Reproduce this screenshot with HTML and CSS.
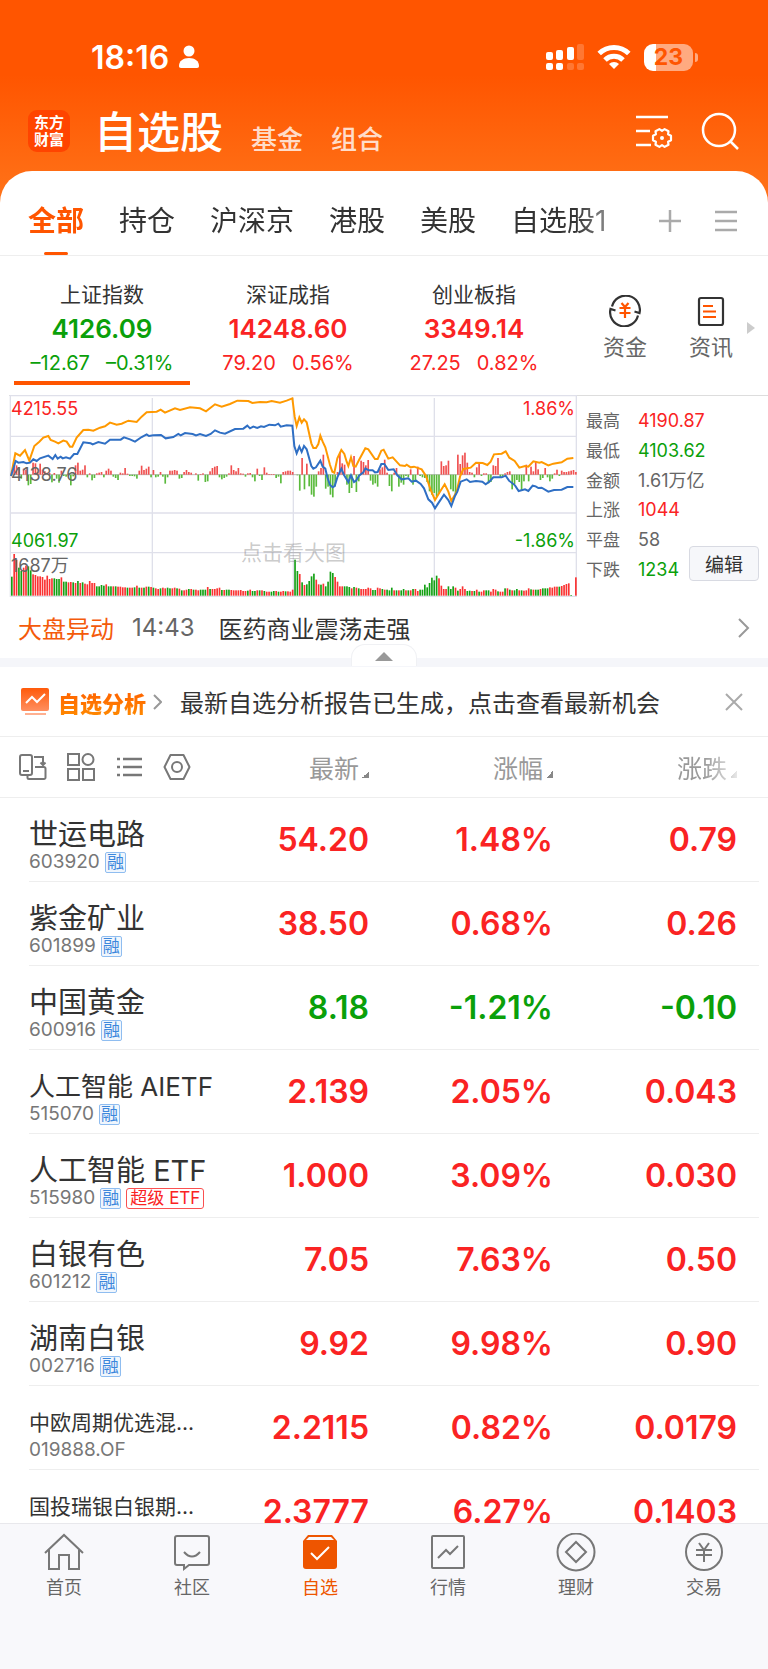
FILE: index.html
```html
<!DOCTYPE html>
<html lang="zh-CN">
<head>
  <meta charset="UTF-8">
  <meta name="viewport" content="width=device-width, initial-scale=1">
  <title>自选股</title>
  <link rel="stylesheet" href="styles.css">
</head>
<body>
  <header class="header">
    <div class="status-bar">
      <span class="time">18:16</span>
      <svg class="person" width="22" height="24" viewBox="0 0 22 24" fill="#fff"><circle cx="11" cy="6" r="5.5"/><path d="M1 21c0-5 4-8 10-8s10 3 10 8c0 1-.6 2-2 2H3c-1.400 0-2-1-2-2z"/></svg>
      <div class="status-icons">
        <svg width="38" height="28" viewBox="0 0 38 28" fill="#fff">
          <rect x="0" y="9" width="7" height="8" rx="2"/><rect x="10" y="7" width="7" height="10" rx="2"/><rect x="21" y="4" width="7" height="13" rx="2"/><rect x="31" y="1" width="7" height="16" rx="2" opacity=".2"/>
          <rect x="0" y="20" width="7" height="7" rx="2"/><rect x="10" y="20" width="7" height="7" rx="2"/><rect x="21" y="20" width="7" height="7" rx="2" opacity=".2"/><rect x="31" y="20" width="7" height="7" rx="2" opacity=".2"/>
        </svg>
        <svg width="34" height="26" viewBox="0 0 34 26" fill="none" stroke="#fff" stroke-width="5">
          <path d="M2.200 9.500a21 21 0 0 1 29.600 0"/><path d="M8 16a12.800 12.800 0 0 1 18 0"/><path d="M17 25l-5-5a7.200 7.200 0 0 1 10 0z" fill="#fff" stroke="none"/>
        </svg>
        <div class="battery"><span>23</span></div>
      </div>
    </div>
    <div class="title-bar">
      <a class="logo" href="#">东方<br>财富</a>
      <nav class="main-nav">
        <a class="current" href="#">自选股</a>
        <a href="#">基金</a>
        <a href="#">组合</a>
      </nav>
      <button class="icon-btn" type="button" aria-label="设置">
        <svg width="38" height="38" viewBox="0 0 38 38" fill="none" stroke="#fff" stroke-width="2.500">
          <path d="M1 5h32M1 19h14M1 33h15"/>
          <path d="M36 23.700V28.300L33.100 29.800 33.500 32.700 29.600 34.900 27 33.200 24.400 34.900 20.500 32.700 20.900 29.800 18 28.300V23.700L20.900 22.200 20.500 19.300 24.400 17.100 27 18.800 29.600 17.100 33.500 19.300 33.100 22.200z" stroke-width="2.200" stroke-linejoin="round"/>
          <circle cx="27" cy="26" r="2" fill="#fff" stroke="none"/>
        </svg>
      </button>
      <button class="icon-btn" type="button" aria-label="搜索">
        <svg width="38" height="38" viewBox="0 0 38 38" fill="none" stroke="#fff" stroke-width="2.500"><circle cx="18" cy="18" r="16"/><path d="M29 29l8 8"/></svg>
      </button>
    </div>
  </header>

  <main class="content">
    <div class="group-bar">
      <nav class="groups">
        <a class="current" href="#">全部</a>
        <a href="#">持仓</a>
        <a href="#">沪深京</a>
        <a href="#">港股</a>
        <a href="#">美股</a>
        <a href="#">自选股1</a>
      </nav>
      <button type="button" aria-label="添加分组">
        <svg width="24" height="24" viewBox="0 0 24 24" stroke="#aaa" stroke-width="2.500"><path d="M1 12h22M12 1v22"/></svg>
      </button>
      <button type="button" aria-label="管理分组">
        <svg width="22" height="24" viewBox="0 0 22 24" stroke="#aaa" stroke-width="2.500"><path d="M0 3h22M0 12h22M0 21h22"/></svg>
      </button>
    </div>

    <section class="indexes">
      <button class="index down current" type="button">
        <span class="index-name">上证指数</span>
        <strong>4126.09</strong>
        <span class="change"><span>–12.67</span><span>–0.31%</span></span>
      </button>
      <button class="index up" type="button">
        <span class="index-name">深证成指</span>
        <strong>14248.60</strong>
        <span class="change"><span>79.20</span><span>0.56%</span></span>
      </button>
      <button class="index up" type="button">
        <span class="index-name">创业板指</span>
        <strong>3349.14</strong>
        <span class="change"><span>27.25</span><span>0.82%</span></span>
      </button>
      <div class="shortcuts">
        <a href="#">
          <svg width="32" height="32" viewBox="0 0 32 32" fill="none" stroke="#333" stroke-width="2.200">
            <path d="M3 11.500a14 14 0 0 1 27.500 6.500l-5-1.500M29 20.500a14 14 0 0 1-27.500-6.500l5 1.500"/>
            <path d="M12.500 8l3.500 4 3.500-4M10.500 13h11M10.500 18h11M16 12v11" stroke="#ff5500"/>
          </svg>
          资金
        </a>
        <a href="#">
          <svg width="32" height="32" viewBox="0 0 32 32" fill="none" stroke="#333" stroke-width="2.200">
            <rect x="4" y="3" width="24" height="27" rx="2"/><path d="M8 11h10M8 16.500h13M8 22h13" stroke="#ff5500"/>
          </svg>
          资讯
        </a>
      </div>
      <svg class="more" width="8" height="12" viewBox="0 0 8 12" fill="#ccc"><path d="M0 0l8 6-8 6z"/></svg>
    </section>

    <section class="market">
      <div class="chart">
        <svg id="chart" viewBox="27 15 1704 606"></svg>
        <span class="label high up">4215.55</span>
        <span class="label high-rate up">1.86%</span>
        <span class="label middle">4138.76</span>
        <span class="label low down">4061.97</span>
        <span class="label low-rate down">-1.86%</span>
        <span class="label volume">1687万</span>
        <span class="label hint">点击看大图</span>
      </div>
      <dl class="stats">
        <div><dt>最高</dt><dd class="up">4190.87</dd></div>
        <div><dt>最低</dt><dd class="down">4103.62</dd></div>
        <div><dt>金额</dt><dd>1.61万亿</dd></div>
        <div><dt>上涨</dt><dd class="up">1044</dd></div>
        <div><dt>平盘</dt><dd>58</dd></div>
        <div><dt>下跌</dt><dd class="down">1234</dd></div>
      </dl>
      <button class="edit" type="button">编辑</button>
    </section>

    <a class="news" href="#">
      <span class="news-type">大盘异动</span>
      <time>14:43</time>
      <span class="news-text">医药商业震荡走强</span>
      <svg width="12" height="20" viewBox="0 0 12 20" fill="none" stroke="#999" stroke-width="2"><path d="M1 1l9 9-9 9"/></svg>
    </a>
    <div class="divider">
      <button class="fold" type="button" aria-label="收起">
        <svg width="18" height="9" viewBox="0 0 18 9" fill="#999"><path d="M0 9l9-9 9 9z"/></svg>
      </button>
    </div>

    <div class="report">
      <svg width="28" height="28" viewBox="0 0 28 28" fill="none">
        <defs><linearGradient id="orange" x1="0" y1="0" x2="0" y2="1"><stop offset="0" stop-color="#ff5a0a"/><stop offset="1" stop-color="#ff8f60"/></linearGradient></defs>
        <rect width="28" height="23" rx="2" fill="url(#orange)"/><path d="M5 15l6-6 5 5 8-8" stroke="#fff" stroke-width="2"/><path d="M4 26h21" stroke="#ffb090" stroke-width="2"/>
      </svg>
      <a class="report-title" href="#">自选分析</a>
      <svg width="9" height="16" viewBox="0 0 9 16" fill="none" stroke="#999" stroke-width="2"><path d="M1 1l7 7-7 7"/></svg>
      <a class="report-text" href="#">最新自选分析报告已生成，点击查看最新机会</a>
      <button type="button" aria-label="关闭">
        <svg width="18" height="18" viewBox="0 0 18 18" stroke="#aaa" stroke-width="2"><path d="M1 1l16 16M17 1L1 17"/></svg>
      </button>
    </div>

    <table class="stocks">
      <thead>
        <tr>
          <th class="tools">
            <button type="button" aria-label="横屏"><svg width="28" height="28" viewBox="0 0 28 28"><rect x="1" y="2" width="12" height="20" rx="2"/><path d="M4 18h6M15 4h9v8M21.500 9.500l2.500 2.500 2.500-2.500M16 14h9a1.500 1.500 0 0 1 1.500 1.500v9a1.500 1.500 0 0 1-1.500 1.500H10a1.500 1.500 0 0 1-1.500-1.500V22"/></svg></button>
            <button type="button" aria-label="宫格"><svg width="28" height="28" viewBox="0 0 28 28"><rect x="1" y="1" width="11" height="11"/><circle cx="21" cy="6.500" r="5.500"/><rect x="1" y="16" width="11" height="11"/><rect x="16" y="16" width="11" height="11"/></svg></button>
            <button type="button" aria-label="列表"><svg width="28" height="28" viewBox="0 0 28 28"><path d="M2 6h3M2 14h3M2 22h3M8 6h19M8 14h19M8 22h19" stroke-width="2.500"/></svg></button>
            <button type="button" aria-label="设置"><svg width="28" height="28" viewBox="0 0 28 28"><path d="M7.500 2h13l6 12-6 12h-13l-6-12z" stroke-linejoin="round"/><circle cx="14" cy="14" r="5"/></svg></button>
          </th>
          <th><button type="button">最新<i></i></button></th>
          <th><button type="button">涨幅<i></i></button></th>
          <th class="fade"><button type="button">涨跌<i></i></button></th>
        </tr>
      </thead>
      <tbody>
        <tr class="up">
          <td><a href="#">世运电路</a><div class="code">603920<em>融</em></div></td>
          <td>54.20</td><td>1.48%</td><td>0.79</td>
        </tr>
        <tr class="up">
          <td><a href="#">紫金矿业</a><div class="code">601899<em>融</em></div></td>
          <td>38.50</td><td>0.68%</td><td>0.26</td>
        </tr>
        <tr class="down">
          <td><a href="#">中国黄金</a><div class="code">600916<em>融</em></div></td>
          <td>8.18</td><td>-1.21%</td><td>-0.10</td>
        </tr>
        <tr class="up">
          <td><a class="medium" href="#">人工智能 AIETF</a><div class="code">515070<em>融</em></div></td>
          <td>2.139</td><td>2.05%</td><td>0.043</td>
        </tr>
        <tr class="up">
          <td><a href="#">人工智能 ETF</a><div class="code">515980<em>融</em><em class="super">超级 ETF</em></div></td>
          <td>1.000</td><td>3.09%</td><td>0.030</td>
        </tr>
        <tr class="up">
          <td><a href="#">白银有色</a><div class="code">601212<em>融</em></div></td>
          <td>7.05</td><td>7.63%</td><td>0.50</td>
        </tr>
        <tr class="up">
          <td><a href="#">湖南白银</a><div class="code">002716<em>融</em></div></td>
          <td>9.92</td><td>9.98%</td><td>0.90</td>
        </tr>
        <tr class="up">
          <td><a class="small" href="#">中欧周期优选混...</a><div class="code">019888.OF</div></td>
          <td>2.2115</td><td>0.82%</td><td>0.0179</td>
        </tr>
        <tr class="up">
          <td><a class="small" href="#">国投瑞银白银期...</a><div class="code"></div></td>
          <td>2.3777</td><td>6.27%</td><td>0.1403</td>
        </tr>
      </tbody>
    </table>
  </main>

  <nav class="tab-bar">
    <a href="#"><svg width="40" height="40" viewBox="0 0 40 40"><path d="M1 20L20 2l19 18M5 17v19h10V22h10v14h10V17"/></svg>首页</a>
    <a href="#"><svg width="40" height="40" viewBox="0 0 40 40"><path d="M5 3h30a2 2 0 0 1 2 2v25a2 2 0 0 1-2 2H17l-5 4v-4H5a2 2 0 0 1-2-2V5a2 2 0 0 1 2-2zM12 19q8 9 16 0"/></svg>社区</a>
    <a class="current" href="#"><svg width="40" height="40" viewBox="0 0 40 40"><path d="M8 2h24l5 6v25a3 3 0 0 1-3 3H6a3 3 0 0 1-3-3V8z" fill="#ee5500" stroke="none"/><path d="M9 4h22l3 3H6z" fill="#f8f8fb" stroke="none"/><path d="M11 20l6 6 12-12" stroke="#fff"/></svg>自选</a>
    <a href="#"><svg width="40" height="40" viewBox="0 0 40 40"><rect x="4" y="3" width="32" height="32" rx="1"/><path d="M10 25l8-8 4 4 8-8"/></svg>行情</a>
    <a href="#"><svg width="40" height="40" viewBox="0 0 40 40"><circle cx="20" cy="19" r="18.500"/><path d="M20 9l10 10-10 10-10-10z"/></svg>理财</a>
    <a href="#"><svg width="40" height="40" viewBox="0 0 40 40"><circle cx="20" cy="19" r="18"/><path d="M15 10l5 7 5-7M12 17h16M12 22h16M20 17v12"/></svg>交易</a>
  </nav>
  <script src="chart.js"></script>
</body>
</html>
```
FILE: styles.css
```css
* {
  box-sizing: border-box;
}
body {
  margin: 0;
  height: 100vh;
  display: flex;
  flex-direction: column;
  overflow: hidden;
  font-family: Inter, "Noto Sans CJK SC", sans-serif;
  color: #333;
  background: linear-gradient(#ff5500 75px, #ff7319 200px);
}
a {
  color: inherit;
  text-decoration: none;
}
button {
  padding: 0;
  border: none;
  background: none;
  font: inherit;
  color: inherit;
  cursor: pointer;
}
svg {
  display: block;
  flex-shrink: 0;
}
.up {
  color: #fa2323;
}
.down {
  color: #0aa00a;
}

/* header */
.header {
  color: white;
}
.status-bar {
  display: flex;
  align-items: center;
  gap: 9px;
  height: 74px;
  padding: 40px 75px 0 91px;
}
.time {
  font-size: 32px;
  font-weight: 600;
}
.status-icons {
  display: flex;
  align-items: center;
  gap: 13px;
  margin-left: auto;
}
.battery {
  position: relative;
  width: 49px;
  height: 27px;
  border-radius: 9px;
  background: linear-gradient(to right, #fff 12px, #ffaa80 12px);
  color: #ff5500;
  font-size: 23px;
  font-weight: 700;
  line-height: 27px;
  text-align: center;
}
.battery::after {
  content: "";
  position: absolute;
  right: -5px;
  top: 9px;
  width: 3px;
  height: 9px;
  border-radius: 0 4px 4px 0;
  background: #ffaa80;
}
.title-bar {
  display: flex;
  align-items: center;
  gap: 28px;
  height: 97px;
  padding: 17px 29px 0 28px;
}
.logo {
  width: 42px;
  height: 42px;
  padding-top: 4px;
  border-radius: 9px;
  background: #ff4400;
  font-size: 15px;
  font-weight: 700;
  line-height: 17px;
  text-align: center;
}
.main-nav {
  display: flex;
  align-items: flex-end;
  flex: 1;
  gap: 28px;
  margin-left: -4px;
  padding-top: 2px;
  font-size: 26px;
  font-weight: 500;
  line-height: 45px;
  color: rgba(255, 255, 255, 0.8);
}
.main-nav .current {
  font-size: 43px;
  line-height: 60px;
  color: white;
}

/* groups */
.content {
  flex: 1;
  min-height: 0;
  overflow: hidden;
  border-radius: 32px 32px 0 0;
  background: white;
}
.group-bar {
  display: flex;
  align-items: center;
  gap: 33px;
  height: 85px;
  padding: 0 31px 0 28px;
  border-bottom: 1px solid #eee;
}
.groups {
  display: flex;
  flex: 1;
  gap: 35px;
  height: 100%;
  margin-right: -25px;
  overflow: hidden;
  font-size: 28px;
  line-height: 101px;
  white-space: nowrap;
  -webkit-mask-image: linear-gradient(to right, #000 88%, transparent);
  mask-image: linear-gradient(to right, #000 88%, transparent);
}
.group-bar button {
  padding-top: 15px;
}
.groups .current {
  position: relative;
  height: 84px;
  font-weight: 700;
  color: #ff5500;
}
.groups .current::after {
  content: "";
  position: absolute;
  left: 16px;
  bottom: 0;
  width: 24px;
  height: 3px;
  border-radius: 2px;
  background: #ff5500;
}

/* indexes */
.indexes {
  display: flex;
  gap: 10px;
  height: 129px;
  padding: 0 13px 0 14px;
}
.index {
  display: flex;
  flex-direction: column;
  align-items: center;
  flex: 176;
  padding-top: 24px;
  border-bottom: 4px solid transparent;
  white-space: nowrap;
}
.index.current {
  border-color: #ff5500;
}
.index-name {
  font-size: 21px;
  line-height: 30px;
  color: #333;
}
.index strong {
  font-size: 26px;
  font-weight: 600;
  line-height: 38px;
}
.change {
  display: flex;
  gap: 16px;
  font-size: 20px;
  line-height: 30px;
}
.shortcuts {
  display: flex;
  flex: 172;
  margin-left: 10px;
  font-size: 22px;
  line-height: 32px;
  color: #666;
}
.shortcuts a {
  display: flex;
  flex-direction: column;
  align-items: center;
  flex: 1;
  gap: 4px;
  padding-top: 39px;
}
.more {
  align-self: center;
  margin: 14px 0 0 -17px;
}

/* market chart */
.market {
  display: flex;
  margin: 10px 0 0 9px;
  border-top: 1px solid #ddd;
}
.chart {
  position: relative;
  flex: 568;
  min-width: 0;
}
.chart svg {
  width: 100%;
  margin-top: -1px;
}
.label {
  position: absolute;
  left: 2px;
  font-size: 18px;
  line-height: 20px;
}
.high {
  top: 3px;
}
.high-rate {
  top: 3px;
  left: auto;
  right: 2px;
}
.middle {
  top: 69px;
  color: #666;
}
.low {
  top: 135px;
}
.low-rate {
  top: 135px;
  left: auto;
  right: 2px;
}
.volume {
  top: 160px;
  color: #666;
}
.hint {
  top: 142px;
  left: 232px;
  font-size: 21px;
  line-height: 30px;
  color: rgba(120, 120, 120, 0.4);
}
.stats {
  display: flex;
  flex-direction: column;
  justify-content: space-between;
  flex: 103;
  min-width: 0;
  margin: 0;
  padding: 12px 0 14px 9px;
  font-size: 17px;
  line-height: 26px;
  white-space: nowrap;
  color: #666;
}
.stats div {
  display: flex;
  gap: 18px;
}
.stats dd {
  margin: 0;
  font-size: 18px;
}
.edit {
  align-self: flex-end;
  width: 70px;
  height: 35px;
  margin: 0 9px 16px 0;
  border: 1px solid #d8dae2;
  border-radius: 4px;
  background: #f6f7fa;
  font-size: 19px;
  color: #333;
}

/* news and report */
.news {
  display: flex;
  align-items: center;
  height: 61px;
  padding: 0 18px;
  font-size: 24px;
}
.news-type {
  color: #f45a0a;
}
.news time {
  margin: 0 24px 0 18px;
  color: #666;
}
.news-text {
  flex: 1;
}
.divider {
  position: relative;
  height: 9px;
  background: #f5f6fa;
}
.fold {
  position: absolute;
  left: 50%;
  bottom: 1px;
  display: flex;
  justify-content: center;
  width: 66px;
  height: 22px;
  margin-left: -33px;
  padding-top: 7px;
  border: 1px solid #f0f1f4;
  border-bottom: none;
  border-radius: 14px 14px 0 0;
  background: white;
}
.report {
  display: flex;
  align-items: center;
  height: 70px;
  padding: 0 25px 0 21px;
  border-bottom: 1px solid #eee;
  font-size: 24px;
}
.report-title {
  margin: 0 7px 0 9px;
  font-size: 22px;
  font-weight: 900;
  color: transparent;
  background: linear-gradient(#ff5a00, #ff8c00);
  -webkit-background-clip: text;
  background-clip: text;
}
.report-text {
  flex: 1;
  margin-left: 18px;
}

/* stock list */
.stocks,
.stocks thead,
.stocks tbody {
  display: block;
}
.stocks tr {
  display: grid;
  grid-template-columns: 1fr 140px 184px 184px;
  align-items: center;
}
.stocks th,
.stocks td {
  padding: 0;
  text-align: right;
}
.stocks thead tr {
  height: 61px;
  padding: 0 31px 0 19px;
  border-bottom: 1px solid #eee;
}
.stocks th {
  font-size: 25px;
  font-weight: 400;
  color: #999;
}
.tools {
  display: flex;
  gap: 20px;
}
.tools svg {
  fill: none;
  stroke: #777;
  stroke-width: 2;
}
.stocks i {
  display: inline-block;
  width: 7px;
  height: 7px;
  margin-left: 3px;
  background: linear-gradient(135deg, transparent 50%, #888 50%);
}
.fade {
  -webkit-mask-image: linear-gradient(to right, #000 82%, rgba(0, 0, 0, 0.2));
  mask-image: linear-gradient(to right, #000 82%, rgba(0, 0, 0, 0.2));
}
.stocks tbody tr {
  height: 84px;
  margin: 0 9px 0 29px;
  padding-right: 22px;
  border-bottom: 1px solid #eee;
}
.stocks td {
  font-size: 32px;
  font-weight: 600;
  line-height: 26px;
}
.stocks td:first-child {
  min-width: 0;
  padding-top: 13px;
  font-size: 29px;
  font-weight: 400;
  text-align: left;
  white-space: nowrap;
  color: #333;
}
.stocks td a {
  display: block;
  line-height: 32px;
}
.stocks .medium {
  font-size: 26px;
}
.stocks .small {
  font-size: 21px;
}
.code {
  display: flex;
  align-items: center;
  gap: 5px;
  height: 22px;
  font-size: 19px;
  color: #777;
}
.code em {
  height: 21px;
  padding: 0 1px;
  border: 1px solid #8fbdf0;
  border-radius: 2px;
  background: #f0f6fd;
  font-size: 17px;
  font-style: normal;
  line-height: 19px;
  color: #3c87dc;
}
.code .super {
  padding: 0 3px;
  border-color: #fa5050;
  border-radius: 3px;
  background: white;
  color: #fa2323;
}

/* bottom tabs */
.tab-bar {
  display: flex;
  height: 146px;
  padding-top: 9px;
  border-top: 1px solid #e8e8ec;
  background: #f8f8fb;
  font-size: 18px;
  line-height: 26px;
  color: #666;
}
.tab-bar a {
  display: flex;
  flex-direction: column;
  align-items: center;
  flex: 1;
  gap: 2px;
}
.tab-bar svg {
  fill: none;
  stroke: #777;
  stroke-width: 2;
}
.tab-bar .current {
  color: #ee5500;
}
```
FILE: chart.js
```javascript
const chart = document.getElementById("chart");
const RED = "#f05050";
const GREEN = "#5aba3c";

const average = "33,258 46,190 60,197 75,180 88,212 103,168 118,155 130,143 145,138 152,150 165,155 175,160 190,152 200,155 210,170 217,170 230,143 250,120 265,119 280,122 300,113 315,109 330,98 350,104 365,101 385,92 410,96 425,80 440,67 470,65 482,59 495,68 525,55 540,60 570,52 600,55 618,64 645,43 665,50 690,42 712,32 745,33 757,39 780,36 800,37 815,33 840,38 860,32 877,25 884,80 890,108 898,82 905,98 912,88 920,97 934,160 940,174 948,174 955,162 961,137 968,155 976,172 990,225 997,245 1003,248 1012,205 1024,180 1033,192 1040,215 1045,228 1053,202 1060,228 1067,230 1077,210 1096,175 1105,178 1125,207 1133,207 1144,182 1151,179 1165,206 1178,202 1200,226 1215,228 1220,224 1232,232 1242,230 1265,238 1278,258 1292,300 1305,330 1318,308 1334,283 1345,305 1354,333 1370,305 1380,260 1390,237 1412,233 1428,218 1448,219 1462,225 1472,215 1482,193 1505,191 1517,184 1528,203 1544,213 1558,233 1575,228 1585,230 1600,214 1618,218 1625,216 1645,226 1660,221 1685,217 1702,206 1720,204";
const price = "33,258 47,213 55,218 70,216 80,220 90,218 100,208 110,213 120,205 145,197 158,207 166,195 173,206 182,200 188,205 198,202 210,206 222,192 232,192 250,157 272,160 278,163 295,156 315,161 330,149 362,149 372,142 390,148 405,155 425,141 440,133 447,138 460,136 483,135 497,145 520,141 535,132 542,136 555,129 578,132 588,136 600,132 618,138 632,132 645,121 660,128 675,131 705,117 730,116 742,107 750,115 760,110 772,114 783,109 792,111 808,104 825,106 835,101 842,110 860,106 877,107 883,168 890,190 898,170 905,186 912,168 920,178 934,228 940,236 948,232 961,212 968,230 976,236 982,262 990,285 998,292 1004,288 1012,262 1024,236 1032,255 1045,276 1053,256 1062,276 1068,272 1078,256 1090,247 1096,235 1106,241 1118,241 1125,247 1133,246 1144,222 1153,222 1165,240 1181,238 1192,256 1205,268 1225,265 1235,275 1248,272 1262,282 1272,295 1285,328 1296,338 1305,355 1316,338 1332,314 1345,330 1354,348 1365,318 1372,305 1382,275 1400,268 1410,276 1428,273 1447,275 1457,283 1468,275 1480,262 1505,262 1517,257 1527,272 1545,286 1556,303 1575,298 1585,303 1598,287 1607,289 1615,294 1625,293 1645,305 1662,300 1685,299 1702,291 1720,291";

// one value per minute, negative is drawn below the axis
const strength = [
  0, 25, 28, 22, -12, 18, 15, -32, -28, 36, 34, 8, 33, 15, 10, 6, 5, -23, 5, -12,
  -24, 12, -4, -6, 4, -32, -5, 28, 36, 12, 15, 28, -8, 4, -17, -10, 4, 6, 8, -8,
  12, 18, 12, -6, -10, -16, 6, 4, 20, 3, -4, -4, -5, -12, 12, 27, 14, 18, 24, -8,
  14, -8, -6, 8, -6, -27, -8, 12, 12, 14, 12, -12, -10, 8, 14, 8, 6, 0, 4, -18,
  2, 4, -22, -20, 10, 20, 24, 26, -8, -14, -10, -6, 4, 28, 14, 10, 20, 4, 3, -6,
  4, 5, -8, -20, 18, -4, -16, 22, 6, 2, 2, 2, -10, -6, -26, 8, 10, 12, 12, 8,
  0, -2, -48, 50, -44, 33, -35, -60, -66, -36, 10, 20, 60, -42, -36, -60, -68, -35, 8, 66,
  34, 30, -30, -55, -40, 56, -52, -20, 42, 38, 28, 44, -18, -30, -26, -36, 16, 22, 45, 6,
  -34, -50, 6, 20, -36, -24, -30, -4, -8, 16, -30, -20, 24, -4, -8, -10, -22, -50, -60, -55,
  -66, -56, 40, 26, 28, 42, -44, -50, -60, 60, 32, 58, 66, 36, 8, 6, -8, 22, 34, -4,
  4, 4, -26, -22, 28, 26, 50, -10, -6, 4, 8, 10, -44, -28, -16, -22, -48, -20, 30, -20,
  24, 10, 40, 16, -16, -10, 20, -8, -20, -12, 4, 15, -4, 12, 8, 8, 10, 12, 14, 8
];

// negative is a falling minute (green)
const volume = [
  -57, 125, 108, -84, -74, 84, 90, -88, -76, 64, 62, 58, 58, 56, 48, 60, 50, 52, -52, -50,
  -50, 55, -42, -42, 40, 41, -40, 38, -44, 38, -40, 36, 34, 44, 38, 38, -28, -28, -32, -30,
  34, -28, -28, 28, -28, 27, 27, 25, 25, -24, 24, 24, -25, 30, -24, 24, -24, 27, -27, 26,
  -24, 22, 20, -22, 24, 22, -24, -22, 22, 24, -22, 21, -16, 16, 18, -20, 20, -18, 18, 16,
  -18, -18, -18, 26, -20, 20, 20, 22, 24, -17, 17, -18, -18, 17, 16, 16, 16, 17, 14, 14,
  -15, 18, -14, -14, 16, -16, 16, -14, 12, 12, -12, -14, 14, -12, 12, 14, -13, 13, 12, 18,
  -108, -74, 65, -40, 32, -34, -44, -58, -66, 48, 34, -33, 36, -28, -42, -72, -68, 56, 42, 28,
  28, -28, -28, -26, 22, -26, 24, -22, 20, 20, 20, 24, 22, -17, -17, 24, 22, -20, 18, -18,
  -16, -24, 16, -16, 16, -16, -20, 16, -16, 16, -20, 20, 14, -18, -18, -33, -25, -38, -54, -46,
  -60, 52, 30, 20, 20, -28, -20, -28, 24, -15, 20, 28, 20, -14, -15, 14, -14, 18, -12, 12,
  16, -16, -16, 12, 20, 18, -13, 12, 12, -22, 22, -18, 16, -16, -20, 16, -16, 15, 16, 22,
  -19, 18, -18, -18, 20, -22, -22, -22, 25, 24, 27, 27, -27, 29, 32, 35, 37, -2, 0, 55
];

function bars(values, base, red, green, below) {
  return values.map((v, i) => {
    const h = Math.abs(v);
    const y = below && v < 0 ? base : base - h;
    return `<rect x="${33 + i * 7.08}" y="${y}" width="5" height="${h}" fill="${v < 0 ? green : red}"/>`;
  }).join("");
}

chart.innerHTML = `
  <path d="M31 17H1729V619H31ZM31 139H1729M31 369H1729M31 488H1729M457 24V619M880 24V619M1303 24V619" fill="none" stroke="#dfe0ea" stroke-width="4"/>
  <path d="M33 254H1712" stroke="#999" stroke-width="2"/>
  ${bars(strength, 254, RED, GREEN, true)}
  ${bars(volume, 617, "#fa3232", "#14a014", false)}
  <polyline points="${average}" fill="none" stroke="#ff9900" stroke-width="6"/>
  <polyline points="${price}" fill="none" stroke="#2f6fc4" stroke-width="6"/>`;
```
